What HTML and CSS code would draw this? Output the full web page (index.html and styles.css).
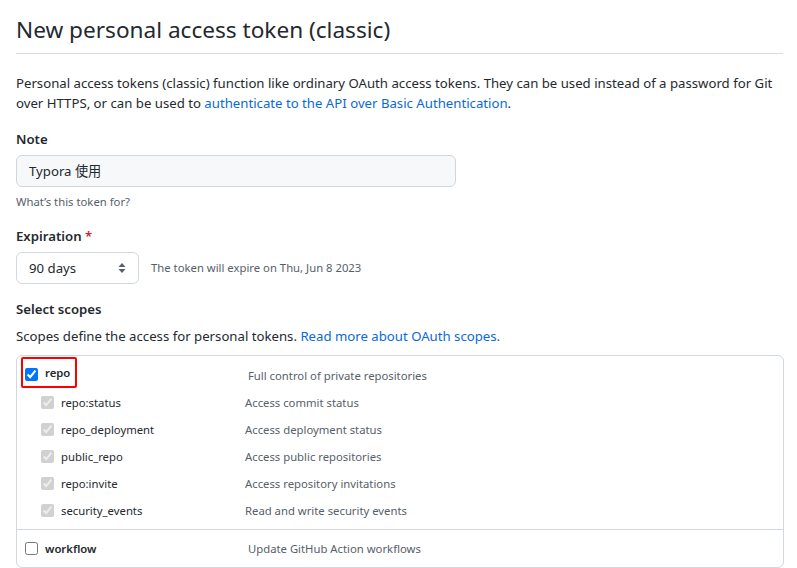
FILE: index.html
```html
<!DOCTYPE html>
<html lang="en">
<head>
<meta charset="utf-8">
<title>New personal access token (classic)</title>
<link rel="stylesheet" href="styles.css">
</head>
<body>
<div class="page">
  <h1 class="title">New personal access token (classic)</h1>
  <p class="intro">Personal access tokens (classic) function like ordinary OAuth access tokens. They can be used instead of a password for Git over HTTPS, or can be used to <a href="#">authenticate to the API over Basic Authentication</a>.</p>

  <div class="field">
    <label class="label">Note</label>
    <div class="input">Typora 使用</div>
    <div class="hint">What’s this token for?</div>
  </div>

  <div class="field">
    <label class="label">Expiration <span class="req">*</span></label>
    <div class="exp-row">
      <div class="select">
        <span>90 days</span>
        <svg class="arrows" width="8" height="12" viewBox="0 0 8 12"><path d="M4 1 L7.5 5 H0.5 Z M4 11 L0.5 7 H7.5 Z" fill="#57606a"/></svg>
      </div>
      <span class="exp-note">The token will expire on Thu, Jun 8 2023</span>
    </div>
  </div>

  <div class="field">
    <div class="label">Select scopes</div>
    <p class="scopes-desc">Scopes define the access for personal tokens. <a href="#">Read more about OAuth scopes.</a></p>
  </div>

  <div class="scopes">
    <div class="group">
      <div class="row top">
        <div class="name-cell top-cell"><span class="mark"><input type="checkbox" checked><b>repo</b></span></div>
        <div class="desc top-desc">Full control of private repositories</div>
      </div>
      <div class="row sub">
        <div class="name-cell sub-cell"><input type="checkbox" checked disabled><span>repo:status</span></div>
        <div class="desc">Access commit status</div>
      </div>
      <div class="row sub">
        <div class="name-cell sub-cell"><input type="checkbox" checked disabled><span>repo_deployment</span></div>
        <div class="desc">Access deployment status</div>
      </div>
      <div class="row sub">
        <div class="name-cell sub-cell"><input type="checkbox" checked disabled><span>public_repo</span></div>
        <div class="desc">Access public repositories</div>
      </div>
      <div class="row sub">
        <div class="name-cell sub-cell"><input type="checkbox" checked disabled><span>repo:invite</span></div>
        <div class="desc">Access repository invitations</div>
      </div>
      <div class="row sub">
        <div class="name-cell sub-cell"><input type="checkbox" checked disabled><span>security_events</span></div>
        <div class="desc">Read and write security events</div>
      </div>
    </div>
    <div class="group last">
      <div class="row top">
        <div class="name-cell top-cell plain"><input type="checkbox"><b>workflow</b></div>
        <div class="desc top-desc">Update GitHub Action workflows</div>
      </div>
    </div>
  </div>
</div>
</body>
</html>
```

FILE: styles.css
```css
* { box-sizing: border-box; }
html, body { margin: 0; background: #fff; }
body {
  font-family: "Noto Sans", "Noto Sans CJK SC", sans-serif;
  color: #24292f;
  font-size: 13.2px;
  line-height: 20px;
  overflow: hidden;
}
a { color: #0969da; text-decoration: none; }
.page { padding: 0 14px 0 16px; width: 797px; }
.title {
  margin: 0;
  padding: 12px 0 5px;
  font-size: 22.6px;
  line-height: 36px;
  font-weight: 400;
  border-bottom: 1px solid #d8dee4;
}
.intro { margin: 19px 0 0; }
.field { margin-top: 15px; }
.field:first-of-type { margin-top: 16px; }
.label { display: block; font-weight: 600; }
.req { color: #cf222e; }
.input {
  margin-top: 6px;
  width: 440px;
  height: 32px;
  padding: 5px 12px;
  background: #f6f8fa;
  border: 1px solid #d0d7de;
  border-radius: 6px;
}
.hint { margin-top: 6px; font-size: 11.3px; line-height: 18px; color: #57606a; }
.exp-row { margin-top: 6px; display: flex; align-items: center; gap: 12px; }
.select {
  width: 123px;
  height: 32px;
  padding: 5px 12px;
  display: flex;
  align-items: center;
  justify-content: space-between;
  border: 1px solid #d0d7de;
  border-radius: 6px;
  background: #fff;
}
.exp-note { font-size: 11.3px; color: #57606a; }
.scopes-desc { margin: 7px 0 0; }
.scopes {
  margin-top: 9px;
  width: 768px;
  border: 1px solid #d0d7de;
  border-radius: 6px;
}
.group { padding: 6px 0 5px; border-bottom: 1px solid #d0d7de; }
.group.last { padding: 5px 0 5px; border-bottom: 0; }
.row { display: flex; align-items: center; height: 27px; font-size: 11.3px; }
.name-cell { display: flex; align-items: center; }
.top-cell { width: 231px; padding-left: 4px; }
.sub-cell { width: 228px; padding-left: 24px; }
.plain { padding-left: 8px; }
.mark {
  display: flex;
  align-items: center;
  height: 31px;
  width: 56px;
  margin-bottom: 6px;
  border: 2px solid #f00;
  border-radius: 2px;
  padding-left: 2px;
}
input[type=checkbox] { margin: 0 7px 0 0; width: 13px; height: 13px; accent-color: #0075ff; }
.mark input { margin-top: 3px; }
.row b { font-weight: 600; }
.desc { color: #57606a; }
```
